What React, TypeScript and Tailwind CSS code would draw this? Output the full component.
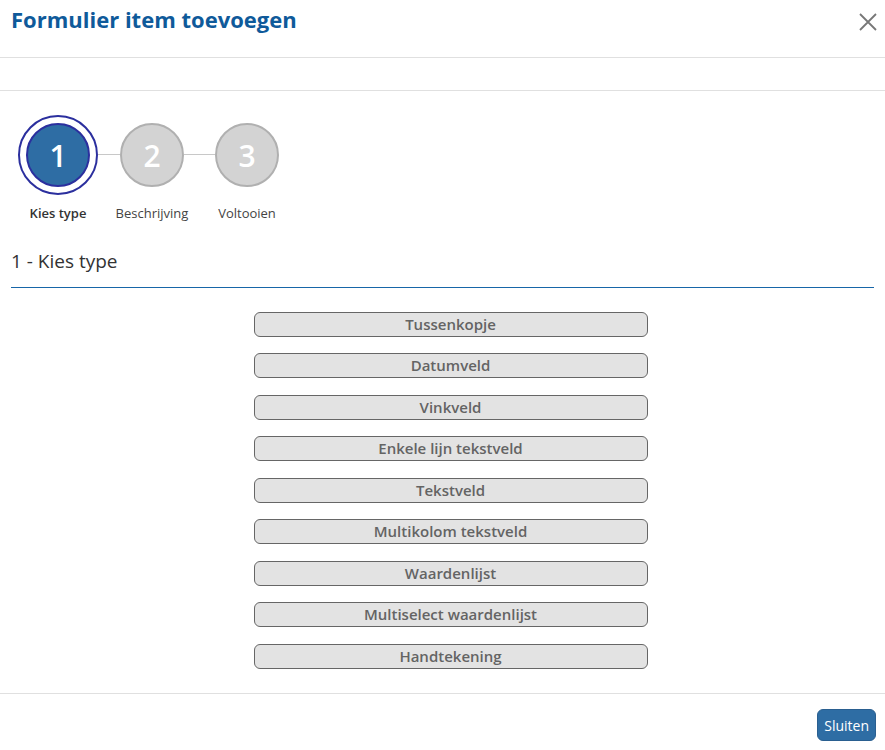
const types = [
  "Tussenkopje",
  "Datumveld",
  "Vinkveld",
  "Enkele lijn tekstveld",
  "Tekstveld",
  "Multikolom tekstveld",
  "Waardenlijst",
  "Multiselect waardenlijst",
  "Handtekening",
];

const steps = [
  { nr: "1", label: "Kies type", active: true, line: 0 },
  { nr: "2", label: "Beschrijving", active: false, line: 22 },
  { nr: "3", label: "Voltooien", active: false, line: 31 },
];

export default function App() {
  return (
    <div className="w-[885px] h-[750px] bg-white font-['Open_Sans',sans-serif] text-[#333] flex flex-col">
      <div className="h-[58px] flex items-center justify-between pl-[11px] pr-[7px] border-b border-[#e0e0e0]">
        <h1 className="text-[22px] font-bold text-[#0f5a9a] -mt-[18px]">
          Formulier item toevoegen
        </h1>
        <button className="text-[#777] -mt-[14px]">
          <svg width="20" height="20" viewBox="0 0 20 20" stroke="currentColor" strokeWidth="1.8">
            <path d="M2 2 L18 18 M18 2 L2 18" />
          </svg>
        </button>
      </div>
      <div className="h-[33px] border-b border-[#e0e0e0]" />

      <div className="px-[11px] pt-[24px]">
        <div className="flex items-start pl-[7px]">
          {steps.map((s) => (
            <div key={s.nr} className="flex items-start">
              {s.line > 0 && <div className="h-px bg-[#c8c8c8] mt-[39px]" style={{ width: s.line }} />}
              <div className={`flex flex-col items-center ${s.active ? "w-[80px]" : "w-[64px]"}`}>
                <div className="h-[80px] flex items-center justify-center">
                  {s.active ? (
                    <div className="w-[80px] h-[80px] rounded-full border-2 border-[#2b2f9e] flex items-center justify-center">
                      <div className="w-[64px] h-[64px] rounded-full bg-[#2e6da4] border-2 border-[#2b2f9e] flex items-center justify-center text-white text-[30px] font-semibold">
                        {s.nr}
                      </div>
                    </div>
                  ) : (
                    <div className="w-[64px] h-[64px] rounded-full bg-[#d3d3d3] border-2 border-[#b0b0b0] flex items-center justify-center text-white text-[30px] font-semibold">
                      {s.nr}
                    </div>
                  )}
                </div>
                <div className={`mt-[9px] whitespace-nowrap text-[13px] ${s.active ? "font-semibold text-[#333]" : "text-[#444]"}`}>
                  {s.label}
                </div>
              </div>
            </div>
          ))}
        </div>

        <h2 className="mt-[23px] text-[19px] leading-[28px] text-[#333]">1 - Kies type</h2>
        <div className="mt-[12px] border-t border-[#1766a8]" />

        <div className="flex flex-col items-center gap-[16.5px] mt-[24px] pl-[16px]">
          {types.map((t) => (
            <button
              key={t}
              className="w-[394px] h-[25px] rounded-[6px] border border-[#666] bg-[#e3e3e3] text-[15px] font-semibold text-[#646464] leading-none"
            >
              {t}
            </button>
          ))}
        </div>
      </div>

      <div className="mt-auto border-t border-[#e0e0e0] h-[57px] flex items-start justify-end pr-[9px] pt-[15px]">
        <button className="h-[32px] px-[6px] rounded-[6px] bg-[#2e6da4] border border-[#2a5f90] text-white text-[14px]">
          Sluiten
        </button>
      </div>
    </div>
  );
}
